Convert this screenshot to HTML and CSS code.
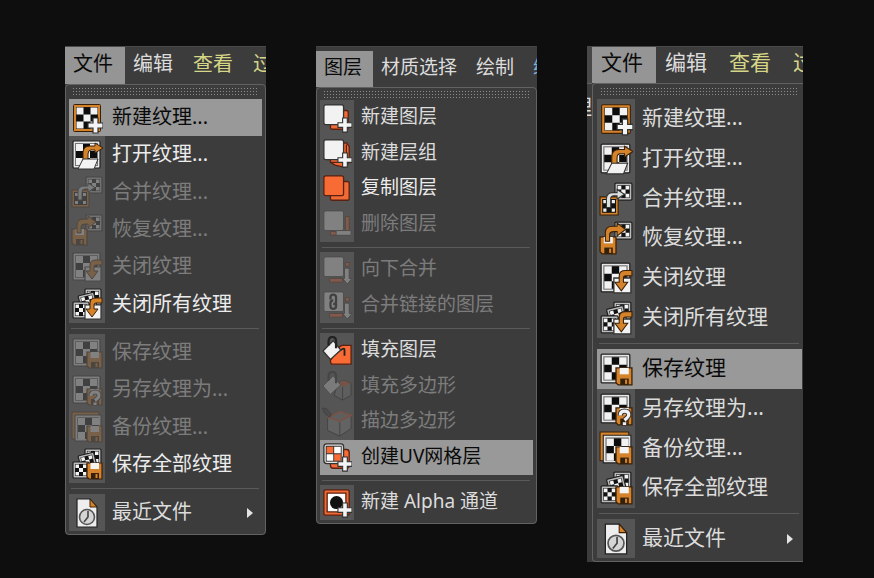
FILE: index.html
```html
<!DOCTYPE html>
<html lang="zh-CN">
<head>
<meta charset="utf-8">
<title>纹理与图层菜单</title>
<link rel="stylesheet" href="styles.css">
</head>
<body>
<svg class="defs" aria-hidden="true">
  <defs>
    <g id="plus"><path d="M22 16h5v5h5v5h-5v5h-5v-5h-5v-5h5z" fill="#f4f4f4" stroke="#333" stroke-width="1.2"/></g>
    <g id="cells">
      <path d="M0 0h21v21H0z" fill="#0c0c0c"/>
      <path d="M0 0h7v7H0zM14 0h7v7h-7zM7 7h7v7H7zM0 14h7v7H0zM14 14h7v7h-7z" fill="#f2f2f2"/>
    </g>
    <g id="texture">
      <rect x="2" y="2" width="27" height="27" rx="1" fill="#e6e6e6" stroke="#222" stroke-width="1.2"/>
      <path d="M4 4h23v23H4z" fill="#777"/>
      <use href="#cells" x="5" y="5"/>
    </g>
    <g id="mini">
      <rect x="0" y="0" width="16" height="16" rx="1" fill="#bbb" stroke="#222" stroke-width="1.2"/>
      <path d="M2 2h12v12H2z" fill="#111"/>
      <path d="M2.500 2.500h3.500v3.500H2.500zM10 2.500h3.500v3.500H10zM6 6h4v4H6zM2.500 10h3.500v3.500H2.500zM10 10h3.500v3.500H10z" fill="#f4f4f4"/>
    </g>
    <g id="disk">
      <path d="M0 0h15v16H2l-2-2z" fill="#d5832b" stroke="#3a2008" stroke-width="1.2"/>
      <path d="M3.500 0h8.500v6H3.500z" fill="#f4f4f4"/>
      <path d="M4 10h8v6H4z" fill="#33200c"/>
      <path d="M8.500 11h2v4h-2z" fill="#d5832b"/>
    </g>
    <g id="down-arrow">
      <path d="M14 16h16v14H14z" fill="#f2f2f2" stroke="#333" stroke-width="1.200"/>
      <path d="M31 9h-6q-6 0-6 5v6h-4l6 8 6-8h-4v-4q0-2 2-2h6z" fill="#d5832b" stroke="#3a2008" stroke-width="1"/>
    </g>
    <g id="stack">
      <use href="#mini" x="14" y="1"/>
      <g transform="translate(7 8) rotate(-14)"><use href="#mini"/></g>
      <use href="#mini" x="2" y="14"/>
    </g>

    <symbol id="i-new" viewBox="0 0 32 32">
      <rect x="2.500" y="2.500" width="27" height="27" rx="1" fill="#d5832b" stroke="#3a2008"/>
      <path d="M5 5h22v22H5z" fill="#3a2008"/>
      <use href="#cells" x="5.500" y="5.500"/><use href="#plus"/>
    </symbol>
    <symbol id="i-open" viewBox="0 0 32 32">
      <use href="#texture"/>
      <path d="M12 23v-9q0-7 7-7h5V4l8 5-8 5v-3h-4q-3 0-3 4v8z" fill="#d5832b" stroke="#3a2008"/>
      <path d="M12 20h15l-4 10H7z" fill="#f2f2f2" stroke="#333"/>
    </symbol>
    <symbol id="i-merge" viewBox="0 0 32 32">
      <use href="#mini" x="15" y="1"/>
      <g transform="translate(1 14)">
        <path d="M0 0h17v17H0z" fill="#d5832b" stroke="#3a2008"/><path d="M2 2h13v13H2z" fill="#111"/>
        <path d="M3 3h3v3H3zM11 3h3v3h-3zM7 7h3v3H7zM3 11h3v3H3zM11 11h3v3h-3z" fill="#eee"/>
      </g>
      <path d="M7 24V16q0-6 6-6h4V7l7 4.500-7 4.500v-3h-3q-3 0-3 3v8z" fill="#dce0df" stroke="#333"/>
    </symbol>
    <symbol id="i-revert" viewBox="0 0 32 32">
      <use href="#mini" x="15" y="1"/><use href="#disk" x="1" y="15"/>
      <path d="M6 19v-8q0-6 7-6h4V2l8 6-8 6v-4h-3q-4 0-4 3v6z" fill="#d5832b" stroke="#3a2008"/>
    </symbol>
    <symbol id="i-close" viewBox="0 0 32 32"><use href="#texture"/><use href="#down-arrow"/></symbol>
    <symbol id="i-close-all" viewBox="0 0 32 32"><use href="#stack"/><use href="#down-arrow" y="1"/></symbol>
    <symbol id="i-save" viewBox="0 0 32 32"><use href="#texture"/><use href="#disk" x="16" y="15"/></symbol>
    <symbol id="i-save-as" viewBox="0 0 32 32">
      <use href="#texture"/><use href="#disk" x="16" y="15"/>
      <path d="M20 22q0-4 4-4t4 3.500q0 2-4 5M24 28.500v2.500" fill="none" stroke="#333" stroke-width="5"/>
      <path d="M20 22q0-4 4-4t4 3.500q0 2-4 5M24 28.500v2.500" fill="none" stroke="#f2f2f2" stroke-width="3"/>
    </symbol>
    <symbol id="i-backup" viewBox="0 0 32 32">
      <path d="M1 1h27v27H1z" fill="#d5832b" stroke="#3a2008"/>
      <path d="M4 4h26v26H4z" fill="#e6e6e6" stroke="#222"/>
      <path d="M6 6h22v22H6z" fill="#777"/>
      <use href="#cells" x="7" y="7"/><use href="#disk" x="16" y="15"/>
    </symbol>
    <symbol id="i-save-all" viewBox="0 0 32 32"><use href="#stack"/><use href="#disk" x="16" y="15"/></symbol>
    <symbol id="i-recent" viewBox="0 0 32 32">
      <path d="M6 2h13l7 8v20H6z" fill="#eee" stroke="#222" stroke-width="1.200"/>
      <path d="M19 2v8h7z" fill="#d5832b" stroke="#3a2008"/>
      <circle cx="16" cy="20" r="7.500" fill="#d5d5d5" stroke="#555" stroke-width="1.600"/>
      <path d="M17 14v6l-4 5" fill="none" stroke="#444" stroke-width="1.600"/>
    </symbol>

    <symbol id="i-layer" viewBox="0 0 32 32">
      <rect x="9" y="8" width="19" height="20" rx="2" fill="#f06a35" stroke="#5a2010" stroke-width="1.400"/>
      <rect x="2" y="2" width="21" height="21" rx="2" fill="#f2f2f2" stroke="#333" stroke-width="1.400"/><use href="#plus"/>
    </symbol>
    <symbol id="i-group" viewBox="0 0 32 32">
      <path d="M9 10l17-5 3 4v17l-6 5-9-2-5-3z" fill="#f06a35" stroke="#5a2010" stroke-width="1.400"/>
      <path d="M26 7v20M9 26h17" fill="none" stroke="#5a2010" stroke-width="1.400"/>
      <rect x="2" y="2" width="21" height="21" rx="2" fill="#f2f2f2" stroke="#333" stroke-width="1.400"/><use href="#plus"/>
    </symbol>
    <symbol id="i-copy" viewBox="0 0 32 32">
      <rect x="9" y="8" width="20" height="20" rx="2" fill="#f06a35" stroke="#5a2010" stroke-width="1.400"/>
      <rect x="2" y="2" width="21" height="21" rx="2" fill="#f96b35" stroke="#5a2010" stroke-width="1.400"/>
    </symbol>
    <symbol id="i-delete" viewBox="0 0 32 32">
      <path d="M25 8h4v20H9v-4h16z" fill="#f06a35" stroke="#5a2010"/>
      <rect x="2" y="2" width="21" height="21" rx="2" fill="#f2f2f2" stroke="#333"/>
      <rect x="15" y="23" width="16" height="5" rx="1" fill="#f2f2f2" stroke="#333"/>
    </symbol>
    <symbol id="i-down" viewBox="0 0 32 32">
      <path d="M25 8h4v4h-4zM8 25h14v4H8z" fill="#f06a35" stroke="#5a2010"/>
      <rect x="2" y="2" width="21" height="21" rx="2" fill="#f2f2f2" stroke="#333"/>
      <path d="M24 14h5v11h3l-5 6-5-6h2z" fill="#f2f2f2" stroke="#333"/>
    </symbol>
    <symbol id="i-linked" viewBox="0 0 32 32">
      <use href="#i-down" width="32" height="32"/>
      <path d="M9 10V8q0-3 3-3t3 3v4q0 3-3 3M15 14v3q0 3-3 3t-3-3v-3q0-3 3-3" fill="none" stroke="#111" stroke-width="2.400"/>
    </symbol>
    <symbol id="i-fill" viewBox="0 0 32 32">
      <path d="M9 26l7-10q3-7 8-6h7v20H11q-2 0-2-4z" fill="#f96b35" stroke="#5a2010" stroke-width="1.400"/>
      <path d="M20 15q4-3 4 0v6" fill="none" stroke="#222" stroke-width="2"/>
      <path d="M1 16L12 5l8 10-11 10z" fill="#f2f2f2" stroke="#333" stroke-width="1.400"/>
      <path d="M7 10V6q0-5 4-5t4 5v7" fill="none" stroke="#222" stroke-width="2.400"/>
    </symbol>
    <symbol id="i-fill-poly" viewBox="0 0 32 32">
      <path d="M17 13l6-3 8 3v13l-9 5-9-5z" fill="#777" stroke="#111"/>
      <path d="M17 13l6-3 8 3-9 4z" fill="#d05025"/><path d="M22 17v14" stroke="#111"/>
      <path d="M1 16L12 5l8 10-11 10z" fill="#ddd" stroke="#333"/>
      <path d="M7 10V6q0-5 4-5t4 5v7" fill="none" stroke="#222" stroke-width="2.400"/>
    </symbol>
    <symbol id="i-stroke-poly" viewBox="0 0 32 32">
      <path d="M6 11l13-6 12 4v14l-12 8-13-6z" fill="#888" stroke="#111"/>
      <path d="M7 11l12-6 12 4-12 6z" fill="#777" stroke="#d05025" stroke-width="2"/>
      <path d="M19 16v15" stroke="#111"/><path d="M0 1l5 1 5 6-2 3-5-4z" fill="#333" stroke="#111"/>
    </symbol>
    <symbol id="i-uv" viewBox="0 0 32 32">
      <rect x="9" y="8" width="20" height="20" rx="3" fill="#f96b35" stroke="#5a2010" stroke-width="1.400"/>
      <rect x="2" y="2" width="21" height="21" rx="3" fill="#e4e4e4" stroke="#333" stroke-width="1.400"/>
      <path d="M4 4h17v17H4z" fill="#333"/>
      <path d="M5 5h7v7H5zM13 13h7v7h-7z" fill="#f96b35"/><path d="M13 5h7v7h-7zM5 13h7v7H5z" fill="#fff"/>
      <use href="#plus"/>
    </symbol>
    <symbol id="i-alpha" viewBox="0 0 32 32">
      <rect x="2" y="2" width="27" height="27" rx="2" fill="#f06a35" stroke="#5a2010" stroke-width="1.400"/>
      <path d="M5.500 5.500h20v20h-20z" fill="#fff" stroke="#5a2010" stroke-width="1.400"/>
      <circle cx="15.500" cy="15.500" r="7" fill="#111"/><use href="#plus"/>
    </symbol>
  </defs>
</svg>

<main class="board">
  <section class="panel panel-a">
    <nav class="bar">
      <button class="tab active">文件</button><button class="tab">编辑</button><button class="tab changed">查看</button><button class="tab changed">过滤</button>
    </nav>
    <div class="menu">
      <div class="grip"></div>
      <div class="group six">
        <button class="item selected"><span class="ico"><svg><use href="#i-new"/></svg></span>新建纹理...</button>
        <button class="item bright"><span class="ico"><svg><use href="#i-open"/></svg></span>打开纹理...</button>
        <button class="item" disabled><span class="ico"><svg><use href="#i-merge"/></svg></span>合并纹理...</button>
        <button class="item" disabled><span class="ico"><svg><use href="#i-revert"/></svg></span>恢复纹理...</button>
        <button class="item" disabled><span class="ico"><svg><use href="#i-close"/></svg></span>关闭纹理</button>
        <button class="item bright"><span class="ico"><svg><use href="#i-close-all"/></svg></span>关闭所有纹理</button>
      </div>
      <hr>
      <div class="group four">
        <button class="item" disabled><span class="ico"><svg><use href="#i-save"/></svg></span>保存纹理</button>
        <button class="item" disabled><span class="ico"><svg><use href="#i-save-as"/></svg></span>另存纹理为...</button>
        <button class="item" disabled><span class="ico"><svg><use href="#i-backup"/></svg></span>备份纹理...</button>
        <button class="item bright"><span class="ico"><svg><use href="#i-save-all"/></svg></span>保存全部纹理</button>
      </div>
      <hr>
      <div class="group">
        <button class="item submenu"><span class="ico"><svg><use href="#i-recent"/></svg></span>最近文件</button>
      </div>
    </div>
  </section>

  <section class="panel panel-b">
    <nav class="bar">
      <button class="tab active">图层</button><button class="tab">材质选择</button><button class="tab">绘制</button><button class="tab linked">编</button>
    </nav>
    <div class="menu">
      <div class="grip"></div>
      <div class="group four">
        <button class="item"><span class="ico"><svg><use href="#i-layer"/></svg></span>新建图层</button>
        <button class="item"><span class="ico"><svg><use href="#i-group"/></svg></span>新建层组</button>
        <button class="item bright"><span class="ico"><svg><use href="#i-copy"/></svg></span>复制图层</button>
        <button class="item" disabled><span class="ico"><svg><use href="#i-delete"/></svg></span>删除图层</button>
      </div>
      <hr>
      <div class="group two">
        <button class="item" disabled><span class="ico"><svg><use href="#i-down"/></svg></span>向下合并</button>
        <button class="item" disabled><span class="ico"><svg><use href="#i-linked"/></svg></span>合并链接的图层</button>
      </div>
      <hr>
      <div class="group four">
        <button class="item"><span class="ico"><svg><use href="#i-fill"/></svg></span>填充图层</button>
        <button class="item" disabled><span class="ico"><svg><use href="#i-fill-poly"/></svg></span>填充多边形</button>
        <button class="item" disabled><span class="ico"><svg><use href="#i-stroke-poly"/></svg></span>描边多边形</button>
        <button class="item selected"><span class="ico"><svg><use href="#i-uv"/></svg></span>创建UV网格层</button>
      </div>
      <hr>
      <div class="group">
        <button class="item"><span class="ico"><svg><use href="#i-alpha"/></svg></span>新建 Alpha 通道</button>
      </div>
    </div>
  </section>

  <section class="panel panel-c">
    <div class="edge">理</div>
    <div class="main">
      <nav class="bar">
        <button class="tab active">文件</button><button class="tab">编辑</button><button class="tab changed">查看</button><button class="tab changed">过滤</button>
      </nav>
      <div class="menu">
        <div class="grip"></div>
        <div class="group six">
          <button class="item"><span class="ico"><svg><use href="#i-new"/></svg></span>新建纹理...</button>
          <button class="item"><span class="ico"><svg><use href="#i-open"/></svg></span>打开纹理...</button>
          <button class="item"><span class="ico"><svg><use href="#i-merge"/></svg></span>合并纹理...</button>
          <button class="item"><span class="ico"><svg><use href="#i-revert"/></svg></span>恢复纹理...</button>
          <button class="item"><span class="ico"><svg><use href="#i-close"/></svg></span>关闭纹理</button>
          <button class="item"><span class="ico"><svg><use href="#i-close-all"/></svg></span>关闭所有纹理</button>
        </div>
        <hr>
        <div class="group four">
          <button class="item selected"><span class="ico"><svg><use href="#i-save"/></svg></span>保存纹理</button>
          <button class="item"><span class="ico"><svg><use href="#i-save-as"/></svg></span>另存纹理为...</button>
          <button class="item"><span class="ico"><svg><use href="#i-backup"/></svg></span>备份纹理...</button>
          <button class="item"><span class="ico"><svg><use href="#i-save-all"/></svg></span>保存全部纹理</button>
        </div>
        <hr>
        <div class="group">
          <button class="item submenu"><span class="ico"><svg><use href="#i-recent"/></svg></span>最近文件</button>
        </div>
      </div>
    </div>
  </section>
</main>
</body>
</html>
```
FILE: styles.css
```css
* { box-sizing: border-box; }

body {
  margin: 0;
  background: #0e0e0e;
  font-family: "Noto Sans", "Noto Sans CJK SC", sans-serif;
}

.defs { position: absolute; width: 0; height: 0; }

.board {
  display: grid;
  grid-template-columns: 201fr 221fr 216fr;
  column-gap: 50px;
  align-items: start;
  padding: 46px 71px 14px 65px;
}

.panel {
  min-width: 0;
  overflow: hidden;
  background: #3c3c3c;
  font-size: var(--font);
}
.panel-a { --font: 20px; --row: 37px; --line: 35px; --col: 36px; --icon: 32px; --four: 149px; --six: 224px; border-radius: 0 0 4px 4px; }
.panel-b { --font: 19px; --row: 35px; --line: 33px; --col: 34px; --icon: 30px; --two: 71px; --four: 142px; border-radius: 0 0 4px 4px; }
.panel-c { --font: 21px; --row: 39px; --line: 36px; --col: 38px; --icon: 34px; --four: 159px; --six: 239px; display: flex; }

button {
  margin: 0;
  border: 0;
  background: none;
  color: #dcdcdc;
  font: inherit;
  text-align: left;
  white-space: nowrap;
}

.bar {
  display: flex;
  height: 38px;
  overflow: hidden;
  border-top: 1px solid #4a4a4a;
}
.tab {
  flex: none;
  display: flex;
  padding: 0 12px 0 8px;
  line-height: 34px;
}
.tab.active { background: #959595; color: #0a0a0a; }
.tab.changed { color: #d6d687; }
.tab.linked { color: #7fb0d8; }

.panel-b .bar { height: 41px; padding-top: 4px; border-top-color: #454545; }
.panel-b .tab { padding-right: 11px; line-height: 32px; }
.panel-c .tab { padding: 0 13px 0 9px; line-height: 31px; }
.panel-c .bar { height: 37px; }

.menu {
  padding: 3px;
  border: 1px solid #626262;
  border-radius: 4px;
  background: #3c3c3c;
}
.panel-c .menu {
  padding: 3px 1px 3px 4px;
  border-right: 0;
  border-radius: 4px 0 0 4px;
}

/* 1px dots on a 3px lattice */
.grip {
  height: 7px;
  margin: 0 4px 4px;
  background: conic-gradient(from 270deg at 1px 1px, #8c8c8c 90deg, transparent 0) 0 0 / 3px 3px;
}
.panel-b .grip { margin: 0 4px 2px; }
.panel-c .grip { margin: 1px 4px 4px; }

.group { display: grid; grid-auto-rows: 1fr; min-height: var(--row); }
.group.two { height: var(--two); }
.group.four { height: var(--four); }
.group.six { height: var(--six); }

hr {
  height: 1px;
  margin: 5px 3px 5px 2px;
  border: 0;
  background: #5a5a5a;
}
.panel-b hr { margin: 5px 3px 4px 2px; }

.item {
  display: flex;
  align-items: flex-start;
  min-height: 0;
  padding: 0;
  line-height: var(--line);
}
.item.bright { color: #ececec; }
.item:disabled { color: #7c7c7c; }
.item.selected { background: #999; color: #0a0a0a; }

.ico {
  display: flex;
  flex: none;
  align-items: center;
  align-self: stretch;
  justify-content: center;
  width: var(--col);
  margin-right: 7px;
  background: #555;
}
.ico svg { flex: none; width: var(--icon); height: var(--icon); }
.item.selected .ico { background: none; }
.item:disabled svg { opacity: 0.28; }

.submenu::after {
  content: "";
  align-self: center;
  margin: 0 9px 0 auto;
  border: 5px solid transparent;
  border-right: 0;
  border-left: 6px solid #e4e4e4;
}

.edge {
  display: flex;
  flex: none;
  justify-content: flex-end;
  width: 5px;
  padding-top: 45px;
  overflow: hidden;
  background: linear-gradient(#484848 37px, #626262 37px, #626262 38px, #3c3c3c 38px);
  color: #dcdcdc;
  line-height: 30px;
}
.main { flex: 1; min-width: 0; }
```
